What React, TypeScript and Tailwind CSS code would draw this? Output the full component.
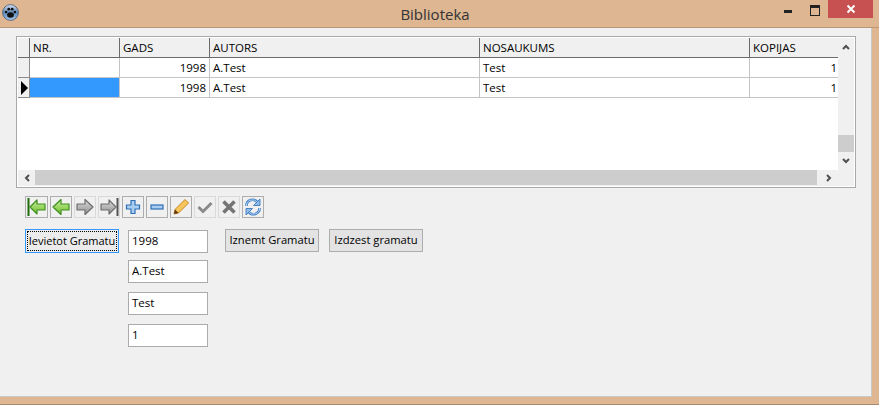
const columns = [
  { name: "NR.", width: "w-[90px]" },
  { name: "GADS", width: "w-[90px]" },
  { name: "AUTORS", width: "w-[270px]" },
  { name: "NOSAUKUMS", width: "w-[270px]" },
  { name: "KOPIJAS", width: "w-[88px]" },
];

function PawIcon() {
  return (
    <svg width="17" height="17" viewBox="0 0 17 17">
      <defs>
        <linearGradient id="paw" x1="0" y1="0" x2="0" y2="1">
          <stop offset="0" stopColor="#d5e0ec" />
          <stop offset="0.5" stopColor="#5d87b8" />
          <stop offset="1" stopColor="#a4c8ee" />
        </linearGradient>
      </defs>
      <circle cx="8.5" cy="8.5" r="7.9" fill="url(#paw)" stroke="#46586e" strokeWidth="0.8" />
      <ellipse cx="8.5" cy="11" rx="3.4" ry="2.8" fill="#111" />
      <circle cx="4.1" cy="8" r="1.3" fill="#111" />
      <circle cx="6.8" cy="5.2" r="1.4" fill="#111" />
      <circle cx="10.2" cy="5.2" r="1.4" fill="#111" />
      <circle cx="12.9" cy="8" r="1.3" fill="#111" />
    </svg>
  );
}

function TitleBar() {
  return (
    <div className="flex h-[28px] border-b border-[#b89878] bg-[#deb692]">
      <div className="w-[95px] pl-[2px] pt-[4px]">
        <PawIcon />
      </div>
      <div className="flex-1 pt-[4px] text-center text-[15px] leading-[20px] text-[#333]">Biblioteka</div>
      <div className="flex w-[104px] items-start">
        <div className="ml-[9px] mt-[10px] h-[3px] w-[8px] bg-[#222]" />
        <div className="ml-[18px] mt-[5px] h-[11px] w-[10px] border border-t-[3px] border-[#222]" />
        <div className="ml-[8px] flex h-[18px] w-[45px] items-center justify-center bg-[#c75050]">
          <svg width="10" height="10" viewBox="0 0 10 10">
            <path d="M1.5 1.5 8.5 8.5M8.5 1.5 1.5 8.5" stroke="#fff" strokeWidth="2" />
          </svg>
        </div>
      </div>
    </div>
  );
}

function Row({ active }: { active?: boolean }) {
  const cell = "h-[20px] shrink-0 border-r border-b border-[#c4c4c4] px-[3px] text-[11.5px] leading-[19px] text-black";
  return (
    <div className="flex">
      <div className="flex h-[20px] w-[12px] shrink-0 items-center border-r border-b border-[#8c8c8c] bg-[#f0f0f0]">
        {active && (
          <svg width="8" height="14" viewBox="0 0 8 14" className="ml-[3px]">
            <path d="M0 0 7 7 0 14Z" fill="#000" />
          </svg>
        )}
      </div>
      <div className={`${cell} w-[90px] ${active ? "bg-[#3399ff]" : "bg-white"}`} />
      <div className={`${cell} w-[90px] text-right`}>1998</div>
      <div className={`${cell} w-[270px]`}>A.Test</div>
      <div className={`${cell} w-[270px]`}>Test</div>
      <div className={`${cell} w-[88px] border-r-0 pr-[1px] text-right`}>1</div>
    </div>
  );
}

function Chevron({ d }: { d: string }) {
  return (
    <svg width="8" height="8" viewBox="0 0 8 8">
      <path d={d} fill="none" stroke="#505050" strokeWidth="2" />
    </svg>
  );
}

function DataGrid() {
  return (
    <div className="ml-[16px] mt-[8px] flex h-[152px] w-[840px] border border-[#a9a9a9]">
      <div className="flex flex-1 flex-col border border-white bg-[#f0f0f0]">
        <div className="flex h-[132px]">
          <div className="w-[820px] bg-white">
            <div className="flex h-[20px] bg-[#f0f0f0]">
              <div className="h-[20px] w-[12px] shrink-0 border-r border-b border-[#6b6b6b]" />
              {columns.map((c) => (
                <div
                  key={c.name}
                  className={`${c.width} h-[20px] shrink-0 border-r border-b border-[#6b6b6b] px-[3px] text-[11.5px] leading-[19px] text-black last:border-r-0`}
                >
                  {c.name}
                </div>
              ))}
            </div>
            <Row />
            <Row active />
          </div>
          <div className="flex w-[16px] flex-col items-center">
            <div className="flex h-[18px] items-center justify-center">
              <Chevron d="M1 6 4 3 7 6" />
            </div>
            <div className="mt-[79px] h-[17px] w-full bg-[#cdcdcd]" />
            <div className="flex h-[18px] items-center justify-center">
              <Chevron d="M1 2 4 5 7 2" />
            </div>
          </div>
        </div>
        <div className="flex h-[15px] items-center">
          <div className="flex w-[17px] justify-center">
            <Chevron d="M6 1 3 4 6 7" />
          </div>
          <div className="h-full w-[782px] bg-[#cdcdcd]" />
          <div className="flex w-[24px] justify-center">
            <Chevron d="M2 1 5 4 2 7" />
          </div>
        </div>
      </div>
    </div>
  );
}

const GREEN = { id: "navGreen", light: "#c8ec9a", mid: "#6fbf2e", stroke: "#3f8f1e", bar: "#1f6b0c" };
const GRAY = { id: "navGray", light: "#dcdcdc", mid: "#8f8f8f", stroke: "#6e6e6e", bar: "#555555" };

function NavIcon({ dir, bar, color }: { dir: "left" | "right"; bar?: boolean; color: typeof GREEN }) {
  const arrow = bar
    ? dir === "left"
      ? "M3 10 10 3V7H18V13H10V17Z"
      : "M17 10 10 3V7H2V13H10V17Z"
    : dir === "left"
      ? "M2 10 10 2.5V7H18V13H10V17.5Z"
      : "M18 10 10 2.5V7H2V13H10V17.5Z";
  const gid = `${color.id}${dir}${bar ? "Bar" : ""}`;
  return (
    <svg width="20" height="20" viewBox="0 0 20 20">
      <defs>
        <linearGradient id={gid} x1="0" y1="0" x2="0" y2="1">
          <stop offset="0" stopColor={color.light} />
          <stop offset="1" stopColor={color.mid} />
        </linearGradient>
      </defs>
      <path d={arrow} fill={`url(#${gid})`} stroke={color.stroke} strokeWidth="1.2" strokeLinejoin="round" />
      {bar && <path d={dir === "left" ? "M1.5 1V19" : "M18.5 1V19"} stroke={color.bar} strokeWidth="2" />}
    </svg>
  );
}

function ToolButton({ disabled, wide, children }: { disabled?: boolean; wide?: boolean; children: React.ReactNode }) {
  return (
    <div
      className={`flex h-[22px] items-center justify-center border bg-[#f0f0f0] ${wide ? "w-[23px]" : "w-[22px]"} ${
        disabled ? "border-[#d9d9d9]" : "border-[#adadad]"
      }`}
    >
      {children}
    </div>
  );
}

function Toolbar() {
  return (
    <div className="ml-[25px] mt-[8px] flex gap-[2px]">
      <ToolButton wide><NavIcon dir="left" bar color={GREEN} /></ToolButton>
      <ToolButton><NavIcon dir="left" color={GREEN} /></ToolButton>
      <ToolButton disabled><NavIcon dir="right" color={GRAY} /></ToolButton>
      <ToolButton disabled><NavIcon dir="right" bar color={GRAY} /></ToolButton>
      <ToolButton>
        <svg width="18" height="18" viewBox="0 0 18 18">
          <path d="M7 2.5H11V7H15.5V11H11V15.5H7V11H2.5V7H7Z" fill="#a9cdf0" stroke="#2f6fb5" strokeWidth="1.2" />
        </svg>
      </ToolButton>
      <ToolButton>
        <svg width="18" height="18" viewBox="0 0 18 18">
          <rect x="3" y="7" width="12" height="4" fill="#a9cdf0" stroke="#2f6fb5" strokeWidth="1.2" />
        </svg>
      </ToolButton>
      <ToolButton>
        <svg width="18" height="18" viewBox="0 0 18 18">
          <path d="M13 1.5 16.5 5 6.5 15 2 16 3 11.5Z" fill="#f6c65b" stroke="#c8821e" strokeWidth="1" />
          <path d="M3 11.5 2 16 6.5 15Z" fill="#5a3a1a" />
        </svg>
      </ToolButton>
      <ToolButton disabled>
        <svg width="18" height="18" viewBox="0 0 18 18">
          <path d="M2.5 9 7 13.5 15.5 5" fill="none" stroke="#8a8a8a" strokeWidth="3" />
        </svg>
      </ToolButton>
      <ToolButton disabled>
        <svg width="18" height="18" viewBox="0 0 18 18">
          <path d="M3.5 3.5 14.5 14.5M14.5 3.5 3.5 14.5" stroke="#757575" strokeWidth="3.6" />
        </svg>
      </ToolButton>
      <ToolButton>
        <svg width="20" height="20" viewBox="0 0 20 20" fill="none">
          <path d="M3.5 9A6 6 0 0 1 14.5 5.5" stroke="#3f7fc4" strokeWidth="2.6" />
          <path d="M16.5 11A6 6 0 0 1 5.5 14.5" stroke="#3f7fc4" strokeWidth="2.6" />
          <path d="M3.5 9A6 6 0 0 1 14.5 5.5M16.5 11A6 6 0 0 1 5.5 14.5" stroke="#bcd9f5" strokeWidth="1" />
          <path d="M17 2V8.5H10.5ZM3 18V11.5H9.5Z" fill="#8fbdea" stroke="#2f6fb5" strokeWidth="0.8" />
        </svg>
      </ToolButton>
    </div>
  );
}

function Field({ value }: { value: string }) {
  return (
    <div className="h-[23px] w-[80px] border border-[#ababab] bg-white px-[3px] text-[11.5px] leading-[20px] text-black">
      {value}
    </div>
  );
}

function ActionButton({ label }: { label: string }) {
  return (
    <div className="flex h-[23px] w-[94px] items-center justify-center whitespace-nowrap border border-[#adadad] bg-[#e3e3e3] text-[11.2px] text-black">
      {label}
    </div>
  );
}

export default function App() {
  return (
    <div className="h-[405px] w-[879px] overflow-hidden bg-[#deb692] font-['Open_Sans','Liberation_Sans',sans-serif]">
      <TitleBar />
      <div className="flex h-[369px] w-[872px] flex-col border-r border-b border-[#c9c9c9] bg-[#f0f0f0]">
        <DataGrid />
        <Toolbar />
        <div className="ml-[25px] mt-[11px] flex items-start">
          <div className="flex h-[24px] w-[94px] border border-[#3399ff] bg-[#ececec] p-[1px]">
            <div className="flex flex-1 items-center justify-center whitespace-nowrap border border-dotted border-black text-[11px] text-black">
              Ievietot Gramatu
            </div>
          </div>
          <div className="ml-[9px] mt-[1px] flex flex-col">
            <Field value="1998" />
            <div className="mt-[7px]"><Field value="A.Test" /></div>
            <div className="mt-[9px]"><Field value="Test" /></div>
            <div className="mt-[9px]"><Field value="1" /></div>
          </div>
          <div className="ml-[17px] flex gap-[10px]">
            <ActionButton label="Iznemt Gramatu" />
            <ActionButton label="Izdzest gramatu" />
          </div>
        </div>
      </div>
      <div className="h-[8px] border-b border-[#a88a6c]" />
    </div>
  );
}
